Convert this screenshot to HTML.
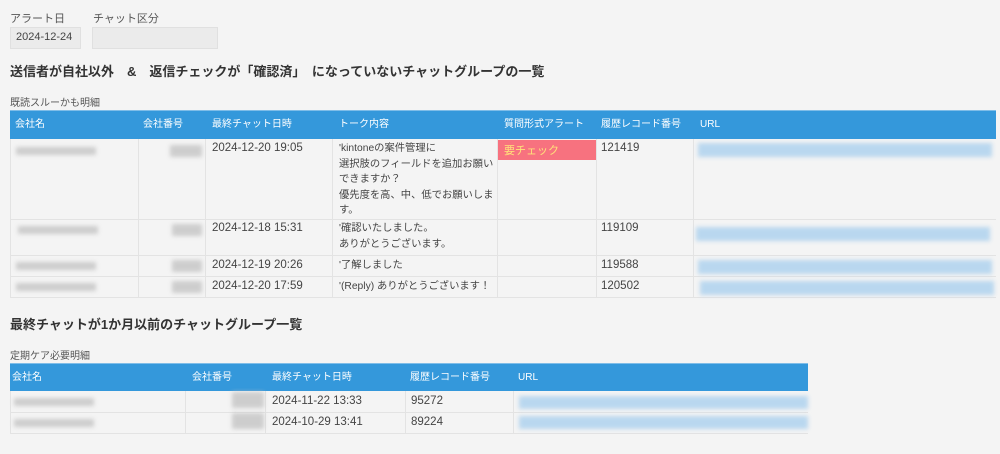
<!DOCTYPE html>
<html><head><meta charset="utf-8"><style>
*{margin:0;padding:0;box-sizing:border-box}
body{width:1000px;height:454px;background:#f4f4f4;font-family:"Liberation Sans","Noto Sans CJK JP",sans-serif;color:#333;position:relative;overflow:hidden}
.a{position:absolute;white-space:nowrap}
.lbl{font-size:11px;color:#555}
.box{position:absolute;background:#ebebeb;border:1px solid #e0e0e0}
.h{font-size:13px;font-weight:bold;color:#333}
.hd{position:absolute;background:#3498db;border-top:1px solid #7fbde8}
.hd span{position:absolute;top:0;line-height:28px;font-size:10px;color:#fff}
.vl{position:absolute;width:1px;background:#e3e3e3}
.hl{position:absolute;height:1px;background:#e3e3e3}
.c{font-size:11.5px;color:#444;line-height:15.5px}
.t{font-size:10.3px!important}
.bg{position:absolute;background:#c4c4c4;filter:blur(2px);opacity:.8}
.bu{position:absolute;background:#b9d7ef;filter:blur(2px)}
</style></head><body>
<div class="a lbl" style="left:10px;top:10px">アラート日</div>
<div class="a lbl" style="left:93px;top:10px">チャット区分</div>
<div class="box" style="left:10px;top:27px;width:71px;height:22px"></div>
<div class="a" style="left:16px;top:31px;font-size:11px;color:#444">2024-12-24</div>
<div class="box" style="left:92px;top:27px;width:126px;height:22px"></div>
<div class="a h" style="left:10px;top:61px">送信者が自社以外　&amp;　返信チェックが「確認済」　になっていないチャットグループの一覧</div>
<div class="a lbl" style="left:10px;top:94px;font-size:10px">既読スルーかも明細</div>

<div class="hd" style="left:10px;top:110px;width:986px;height:29px">
<span style="left:5px">会社名</span><span style="left:133px">会社番号</span><span style="left:202px">最終チャット日時</span><span style="left:329px">トーク内容</span><span style="left:494px">質問形式アラート</span><span style="left:591px">履歴レコード番号</span><span style="left:690px">URL</span></div>
<div class="vl" style="left:10px;top:139px;height:158px"></div>
<div class="vl" style="left:138px;top:139px;height:158px"></div>
<div class="vl" style="left:205px;top:139px;height:158px"></div>
<div class="vl" style="left:332px;top:139px;height:158px"></div>
<div class="vl" style="left:497px;top:139px;height:158px"></div>
<div class="vl" style="left:596px;top:139px;height:158px"></div>
<div class="vl" style="left:693px;top:139px;height:158px"></div>
<div class="hl" style="left:10px;top:219px;width:986px"></div>
<div class="hl" style="left:10px;top:255px;width:986px"></div>
<div class="hl" style="left:10px;top:276px;width:986px"></div>
<div class="hl" style="left:10px;top:297px;width:986px"></div>
<div style="position:absolute;left:498px;top:140px;width:98px;height:20px;background:#f7727f"></div>
<div class="a" style="left:504px;top:142px;font-size:11px;color:#ffe27a">要チェック</div>

<div class="bg" style="left:16px;top:147px;width:80px;height:8px"></div>
<div class="bg" style="left:170px;top:145px;width:32px;height:12px"></div>
<div class="bg" style="left:18px;top:226px;width:80px;height:8px"></div>
<div class="bg" style="left:172px;top:224px;width:30px;height:12px"></div>
<div class="bg" style="left:16px;top:262px;width:80px;height:8px"></div>
<div class="bg" style="left:172px;top:260px;width:30px;height:12px"></div>
<div class="bg" style="left:16px;top:283px;width:80px;height:8px"></div>
<div class="bg" style="left:172px;top:281px;width:30px;height:12px"></div>

<div class="a c" style="left:212px;top:141px">2024-12-20 19:05</div>
<div class="a c t" style="left:339px;top:141px">'kintoneの案件管理に<br>選択肢のフィールドを追加お願い<br>できますか？<br>優先度を高、中、低でお願いしま<br>す。</div>
<div class="a c" style="left:601px;top:141px">121419</div>
<div class="a c" style="left:212px;top:221px">2024-12-18 15:31</div>
<div class="a c t" style="left:339px;top:221px">'確認いたしました。<br>ありがとうございます。</div>
<div class="a c" style="left:601px;top:221px">119109</div>
<div class="a c" style="left:212px;top:258px">2024-12-19 20:26</div>
<div class="a c t" style="left:339px;top:258px">'了解しました</div>
<div class="a c" style="left:601px;top:258px">119588</div>
<div class="a c" style="left:212px;top:279px">2024-12-20 17:59</div>
<div class="a c t" style="left:339px;top:279px">'(Reply) ありがとうございます！</div>
<div class="a c" style="left:601px;top:279px">120502</div>

<div class="bu" style="left:698px;top:143px;width:294px;height:14px"></div>
<div class="bu" style="left:696px;top:227px;width:294px;height:14px"></div>
<div class="bu" style="left:698px;top:260px;width:294px;height:14px"></div>
<div class="bu" style="left:700px;top:281px;width:294px;height:14px"></div>

<div class="a h" style="left:10px;top:314px">最終チャットが1か月以前のチャットグループ一覧</div>
<div class="a lbl" style="left:10px;top:347px;font-size:10px">定期ケア必要明細</div>

<div class="hd" style="left:10px;top:363px;width:798px;height:28px">
<span style="left:2px">会社名</span><span style="left:182px">会社番号</span><span style="left:262px">最終チャット日時</span><span style="left:400px">履歴レコード番号</span><span style="left:508px">URL</span></div>
<div class="vl" style="left:10px;top:391px;height:42px"></div>
<div class="vl" style="left:185px;top:391px;height:42px"></div>
<div class="vl" style="left:265px;top:391px;height:42px"></div>
<div class="vl" style="left:405px;top:391px;height:42px"></div>
<div class="vl" style="left:513px;top:391px;height:42px"></div>
<div class="hl" style="left:10px;top:412px;width:798px"></div>
<div class="hl" style="left:10px;top:433px;width:798px"></div>
<div class="bg" style="left:14px;top:398px;width:80px;height:8px"></div>
<div class="bg" style="left:232px;top:392px;width:32px;height:16px"></div>
<div class="bg" style="left:14px;top:419px;width:80px;height:8px"></div>
<div class="bg" style="left:232px;top:413px;width:32px;height:16px"></div>
<div class="a c" style="left:272px;top:394px">2024-11-22 13:33</div>
<div class="a c" style="left:411px;top:394px">95272</div>
<div class="a c" style="left:272px;top:415px">2024-10-29 13:41</div>
<div class="a c" style="left:411px;top:415px">89224</div>
<div class="bu" style="left:519px;top:396px;width:289px;height:13px"></div>
<div class="bu" style="left:519px;top:416px;width:289px;height:13px"></div>
</body></html>
